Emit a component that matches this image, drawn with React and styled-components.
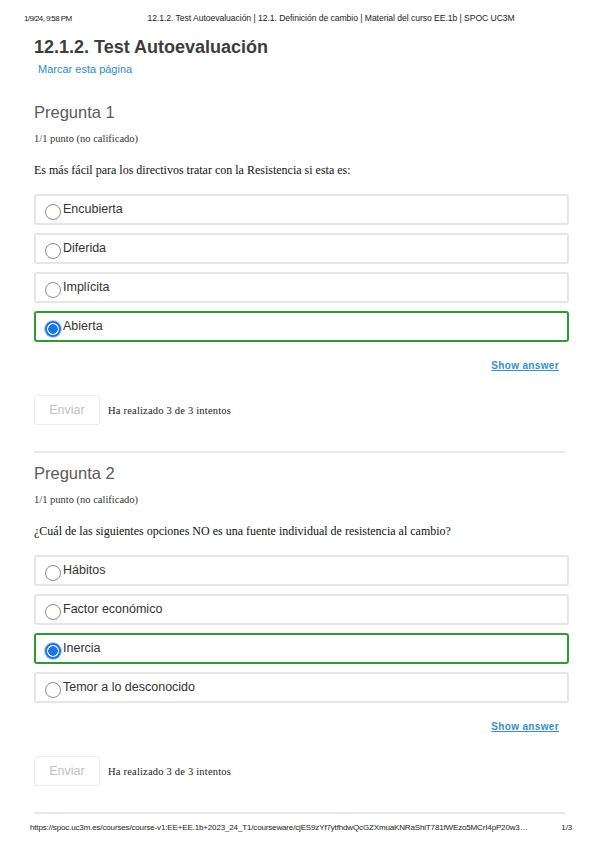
import React from 'react';
import styled, { createGlobalStyle } from 'styled-components';

const GlobalStyle = createGlobalStyle`
  html, body { margin: 0; padding: 0; background: #fff; }
  body { font-family: "Liberation Sans", Arial, sans-serif; color: #333; }
`;

const Page = styled.div`
  width: 599px;
  height: 848px;
  overflow: hidden;
  display: flex;
  flex-direction: column;
`;

const PrintHeader = styled.div`
  height: 36px;
  display: flex;
  align-items: center;
  padding-left: 24px;
  font-size: 8px;
  color: #222;
  .date { letter-spacing: -0.6px; }
  .title { margin-left: 76px; font-size: 8.6px; letter-spacing: -0.05px; }
`;

const Main = styled.div`
  padding: 0 30px 0 34px;
`;

const PageTitle = styled.h1`
  margin: 0;
  font-size: 18px;
  line-height: 22px;
  font-weight: bold;
  color: #3d3d3d;
`;

const Bookmark = styled.a`
  display: block;
  margin: 4px 0 0 4px;
  font-size: 11px;
  line-height: 14px;
  color: #2e8bc9;
  text-decoration: none;
`;

const Problem = styled.section`
  padding-top: ${p => p.$first ? 25 : 9}px;
  padding-bottom: 26px;
  border-bottom: 2px solid #e8e8e8;
  width: 531px;
`;

const Heading = styled.h2`
  margin: 0;
  font-size: 16.5px;
  line-height: 22px;
  font-weight: normal;
  color: #5b5b5b;
`;

const Points = styled.div`
  margin-top: 9px;
  font-family: "Liberation Serif", "Times New Roman", serif;
  font-size: 10.5px;
  line-height: 14px;
  color: #333;
`;

const Prompt = styled.p`
  margin: 16px 0 0;
  font-family: "Liberation Serif", "Times New Roman", serif;
  font-size: 12px;
  line-height: 16px;
  color: #111;
`;

const Choices = styled.div`
  margin-top: 16px;
  width: 535px;
  display: flex;
  flex-direction: column;
  gap: 8px;
`;

const Choice = styled.label`
  height: 31px;
  box-sizing: border-box;
  display: flex;
  align-items: center;
  padding: 0 0 0 9px;
  border: 2px solid ${p => p.$correct ? '#2f9a35' : '#e6e6e6'};
  border-radius: 3px;
  font-size: 12.5px;
  color: #333;
`;

const Radio = styled.span`
  width: 16px;
  height: 16px;
  box-sizing: border-box;
  margin: 5px 2px 0 0;
  border-radius: 50%;
  flex: none;
  border: ${p => p.$checked ? '2px solid #1a73e8' : '1.5px solid #8c8c8c'};
  background: ${p => p.$checked ? 'radial-gradient(circle, #1a73e8 0 4.5px, #fff 5px)' : '#fff'};
  box-shadow: ${p => p.$checked ? '0 0 0 1px #a9c8f2' : 'none'};
`;

const ChoiceText = styled.span`
  margin-bottom: 2px;
`;

const ShowAnswer = styled.div`
  margin-top: 17px;
  width: 525px;
  text-align: right;
  font-size: 10px;
  line-height: 14px;
  font-weight: bold;
  letter-spacing: 0.35px;
  color: #3a8fc8;
  text-decoration: underline;
`;

const Actions = styled.div`
  margin-top: 22px;
  display: flex;
  align-items: center;
  gap: 8px;
`;

const SubmitButton = styled.button`
  width: 66px;
  height: 30px;
  box-sizing: border-box;
  background: #fff;
  border: 1.5px solid #ececec;
  border-radius: 3px;
  font-family: "Liberation Sans", Arial, sans-serif;
  font-size: 12.5px;
  color: #c2c2c2;
  padding: 0;
`;

const Attempts = styled.span`
  font-family: "Liberation Serif", "Times New Roman", serif;
  font-size: 10.5px;
  letter-spacing: 0.2px;
  color: #222;
`;

const PrintFooter = styled.div`
  margin-top: 8px;
  padding: 0 27px 0 30px;
  display: flex;
  justify-content: space-between;
  font-size: 8px;
  line-height: 12px;
  color: #222;
  letter-spacing: -0.15px;
`;

const problems = [
  {
    title: 'Pregunta 1',
    prompt: 'Es más fácil para los directivos tratar con la Resistencia si esta es:',
    choices: ['Encubierta', 'Diferida', 'Implícita', 'Abierta'],
    selected: 3,
  },
  {
    title: 'Pregunta 2',
    prompt: '¿Cuál de las siguientes opciones NO es una fuente individual de resistencia al cambio?',
    choices: ['Hábitos', 'Factor económico', 'Inercia', 'Temor a lo desconocido'],
    selected: 2,
  },
];

function ProblemBlock({ problem, first }) {
  return (
    <Problem $first={first}>
      <Heading>{problem.title}</Heading>
      <Points>1/1 punto (no calificado)</Points>
      <Prompt>{problem.prompt}</Prompt>
      <Choices>
        {problem.choices.map((c, i) => (
          <Choice key={c} $correct={i === problem.selected}>
            <Radio $checked={i === problem.selected} />
            <ChoiceText>{c}</ChoiceText>
          </Choice>
        ))}
      </Choices>
      <ShowAnswer>Show answer</ShowAnswer>
      <Actions>
        <SubmitButton disabled>Enviar</SubmitButton>
        <Attempts>Ha realizado 3 de 3 intentos</Attempts>
      </Actions>
    </Problem>
  );
}

export default function App() {
  return (
    <Page>
      <GlobalStyle />
      <PrintHeader>
        <span className="date">1/9/24, 9:58 PM</span>
        <span className="title">12.1.2. Test Autoevaluación | 12.1. Definición de cambio | Material del curso EE.1b | SPOC UC3M</span>
      </PrintHeader>
      <Main>
        <PageTitle>12.1.2. Test Autoevaluación</PageTitle>
        <Bookmark>Marcar esta página</Bookmark>
        {problems.map((p, i) => (
          <ProblemBlock key={p.title} problem={p} first={i === 0} />
        ))}
      </Main>
      <PrintFooter>
        <span>https://spoc.uc3m.es/courses/course-v1:EE+EE.1b+2023_24_T1/courseware/cjES9zYf7ytfhdwQcGZXmuaKNRaShiT781fWEzo5MCrI4pP20w3…</span>
        <span>1/3</span>
      </PrintFooter>
    </Page>
  );
}
